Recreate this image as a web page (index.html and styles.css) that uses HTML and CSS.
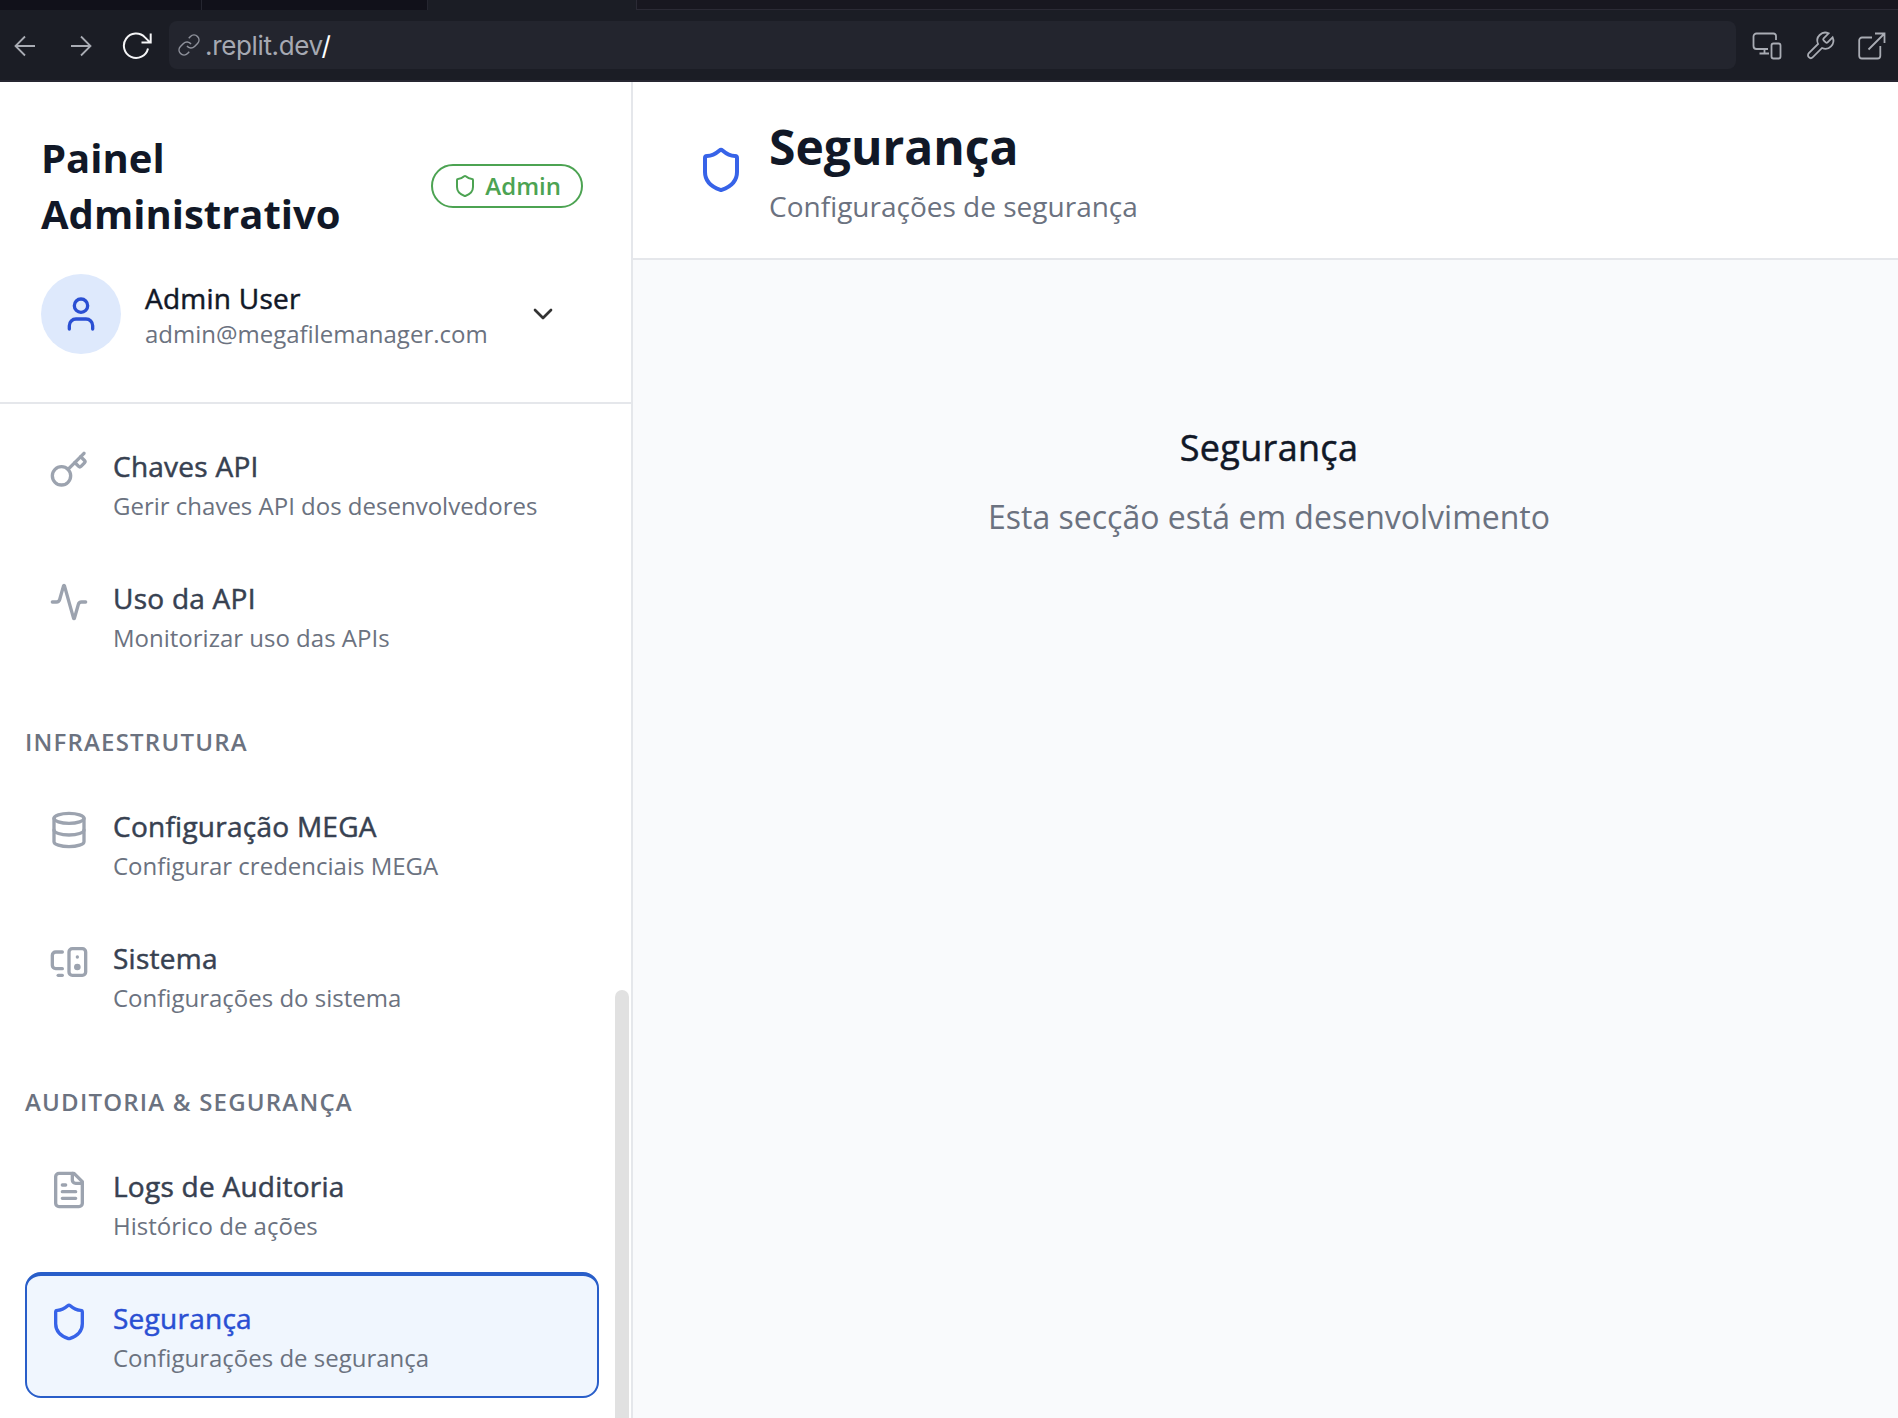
FILE: index.html
```html
<!DOCTYPE html>
<html lang="pt">
<head>
<meta charset="utf-8">
<title>Painel Administrativo</title>
<link rel="stylesheet" href="styles.css">
</head>
<body>
<div class="tabs"><span class="tab tab-first"></span><span class="tab tab-second"></span><span class="tab tab-active"></span><span class="tab tab-rest"></span></div>
<div class="toolbar">
  <div class="nav-buttons">
    <svg class="tool" width="22" height="22" viewBox="0 0 22 22"><path d="M21 11H1.5M11 1.5 1.5 11 11 20.5"/></svg>
    <svg class="tool" width="22" height="22" viewBox="0 0 22 22"><path d="M1 11h19.5M11 1.5l9.5 9.5-9.500 9.500"/></svg>
    <svg class="tool reload" width="30" height="30" viewBox="0 0 30 30"><path d="M26 17.500A12.200 12.200 0 1 1 23 6.400l5 5M28.700 2.500v9H19.500"/></svg>
  </div>
  <div class="address">
    <svg class="link" width="24" height="24" viewBox="0 0 24 24"><path d="M10 13a5 5 0 0 0 7.540.540l3-3a5 5 0 0 0-7.070-7.070l-1.720 1.710M14 11a5 5 0 0 0-7.540-.540l-3 3a5 5 0 0 0 7.070 7.070l1.710-1.710"/></svg>
    <span class="url">.replit.dev<b>/</b></span>
  </div>
  <div class="tools">
    <svg class="tool" width="30" height="28" viewBox="0 0 30 28"><path d="M24 8V4a2.500 2.500 0 0 0-2.500-2.500h-17A3 3 0 0 0 1.500 4.500v9.500a3 3 0 0 0 3 3H16M12.500 17v4.500M7.500 21.500H17"/><rect x="19.500" y="11.500" width="9" height="15" rx="2"/></svg>
    <svg class="tool wrench" width="32" height="32" viewBox="0 0 24 24"><path d="M14.700 6.300a1 1 0 0 0 0 1.400l1.600 1.600a1 1 0 0 0 1.400 0l3.770-3.770a6 6 0 0 1-7.940 7.940l-6.910 6.910a2.120 2.120 0 0 1-3-3l6.910-6.910a6 6 0 0 1 7.940-7.940l-3.760 3.760z"/></svg>
    <svg class="tool" width="28" height="28" viewBox="0 0 28 28"><path d="M14 5.500H4A2.800 2.800 0 0 0 1.200 8.300v15.400a2.800 2.800 0 0 0 2.800 2.800h15.500a2.800 2.800 0 0 0 2.800-2.800V14M17 1.500h9.500V11M26.500 1.500 10.500 17.500"/></svg>
  </div>
</div>
<div class="app">
  <aside class="sidebar">
    <header class="side-head">
      <div class="brand">
        <h2>Painel Administrativo</h2>
        <span class="badge"><svg class="icon i24" viewBox="0 0 24 24"><use href="#shield"/></svg><span class="badge-text">Admin</span></span>
      </div>
      <div class="user">
        <span class="avatar"><svg class="icon i40" viewBox="0 0 24 24"><path d="M19 21v-2a4 4 0 0 0-4-4H9a4 4 0 0 0-4 4v2"/><circle cx="12" cy="7" r="4"/></svg></span>
        <div class="who"><p class="name medium">Admin User</p><p class="mail">admin@megafilemanager.com</p></div>
        <svg class="icon i32 chevron" viewBox="0 0 24 24"><path d="m6 9 6 6 6-6"/></svg>
      </div>
    </header>
    <nav class="menu">
      <div class="group">
        <a class="item"><svg class="icon i40" viewBox="0 0 24 24"><path d="m15.500 7.500 2.300 2.300a1 1 0 0 0 1.400 0l2.100-2.100a1 1 0 0 0 0-1.400L19 4"/><path d="m21 2-9.600 9.600"/><circle cx="7.500" cy="15.500" r="5.500"/></svg><span class="label"><b class="medium">Chaves API</b><small>Gerir chaves API dos desenvolvedores</small></span></a>
        <a class="item"><svg class="icon i40" viewBox="0 0 24 24"><path d="M22 12h-2.480a2 2 0 0 0-1.930 1.460l-2.350 8.360a.25.25 0 0 1-.480 0L9.240 2.180a.25.25 0 0 0-.480 0l-2.350 8.360A2 2 0 0 1 4.490 12H2"/></svg><span class="label"><b class="medium">Uso da API</b><small>Monitorizar uso das APIs</small></span></a>
      </div>
      <h3>Infraestrutura</h3>
      <div class="group">
        <a class="item"><svg class="icon i40" viewBox="0 0 24 24"><ellipse cx="12" cy="5" rx="9" ry="3"/><path d="M3 5v14a9 3 0 0 0 18 0V5"/><path d="M3 12a9 3 0 0 0 18 0"/></svg><span class="label"><b class="medium">Configuração MEGA</b><small>Configurar credenciais MEGA</small></span></a>
        <a class="item"><svg class="icon i40" viewBox="0 0 24 24"><path d="M5.500 20H8"/><path d="M17 9h.010"/><rect width="10" height="16" x="12" y="4" rx="2"/><path d="M8 6H4a2 2 0 0 0-2 2v6a2 2 0 0 0 2 2h4"/><circle cx="17" cy="15" r="1"/></svg><span class="label"><b class="medium">Sistema</b><small>Configurações do sistema</small></span></a>
      </div>
      <h3>Auditoria &amp; Segurança</h3>
      <div class="group">
        <a class="item"><svg class="icon i40" viewBox="0 0 24 24"><path d="M15 2H6a2 2 0 0 0-2 2v16a2 2 0 0 0 2 2h12a2 2 0 0 0 2-2V7Z"/><path d="M14 2v4a2 2 0 0 0 2 2h4M10 9H8M16 13H8M16 17H8"/></svg><span class="label"><b class="medium">Logs de Auditoria</b><small>Histórico de ações</small></span></a>
        <a class="item active"><svg class="icon i40" viewBox="0 0 24 24"><use href="#shield"/></svg><span class="label"><b class="medium">Segurança</b><small>Configurações de segurança</small></span></a>
      </div>
      <span class="scroll-thumb"></span>
    </nav>
  </aside>
  <main class="main">
    <header class="page-head">
      <svg class="icon i48" viewBox="0 0 24 24"><path id="shield" d="M20 13c0 5-3.500 7.500-7.660 8.950a1 1 0 0 1-.670-.010C7.500 20.500 4 18 4 13V6a1 1 0 0 1 1-1c2 0 4.500-1.200 6.240-2.720a1.170 1.170 0 0 1 1.520 0C14.510 3.810 17 5 19 5a1 1 0 0 1 1 1z"/></svg>
      <div><h1>Segurança</h1><p>Configurações de segurança</p></div>
    </header>
    <section class="empty"><h3 class="medium">Segurança</h3><p>Esta secção está em desenvolvimento</p></section>
  </main>
</div>
</body>
</html>
```

FILE: styles.css
```css
* { box-sizing: border-box; margin: 0; padding: 0; }
body {
  height: 1418px;
  overflow: hidden;
  display: flex;
  flex-direction: column;
  background: #fff;
  font-family: "Open Sans", "Noto Sans", sans-serif;
}
svg { display: block; flex: none; fill: none; }

/* medium weight, between the regular and semibold faces */
.medium { font-weight: 400; letter-spacing: 0.009em; -webkit-text-stroke: 0.5px currentColor; }

/* browser chrome */
.tabs { display: flex; flex: none; height: 10px; background: #1b1d25; }
.tab { height: 10px; background: #11111a; }
.tab-first { width: 202px; border-right: 1px solid #252630; }
.tab-second { width: 226px; border-right: 1px solid #252630; }
.tab-active { width: 208px; background: #1b1d25; }
.tab-rest { flex: 1; background: #181720; border-left: 1px solid #2b2a35; border-bottom: 1px solid #2b2a35; }
.toolbar {
  display: flex;
  flex: none;
  align-items: center;
  height: 72px;
  padding-right: 12px;
  background: #1b1d25;
  border-bottom: 2px solid #262631;
}
.nav-buttons { display: flex; align-items: center; width: 169px; padding: 1px 0 0 14px; gap: 34px; }
.tool { stroke: #a9acb4; stroke-width: 1.8; }
.reload { stroke: #f5f5f7; stroke-width: 2; margin-left: -4px; }
.address {
  display: flex;
  flex: 1;
  align-items: center;
  gap: 4px;
  height: 48px;
  padding-left: 8px;
  background: #23252e;
  border-radius: 8px;
}
.link { stroke: #8f929c; stroke-width: 1.5; }
.url { padding-top: 2px; color: #a6a9b2; font: 26px/48px Inter, sans-serif; letter-spacing: -0.35px; }
.url b { color: #fff; font-weight: 400; }
.tools { display: flex; align-items: center; width: 150px; padding: 1px 0 0 16px; gap: 22px; }
.wrench { stroke-width: 1.35; }

.app { display: flex; flex: 1; min-height: 0; }
.icon { stroke: currentColor; stroke-width: 2; stroke-linecap: round; stroke-linejoin: round; }
.i24 { width: 24px; height: 24px; }
.i32 { width: 32px; height: 32px; }
.i40 { width: 40px; height: 40px; }
.i48 { width: 48px; height: 48px; }

/* sidebar */
.sidebar { display: flex; flex: none; flex-direction: column; width: 633px; border-right: 2px solid #e5e7eb; }
.side-head { padding: 48px 48px 48px 41px; border-bottom: 2px solid #e5e7eb; }
.brand { display: flex; align-items: center; justify-content: space-between; margin-bottom: 32px; }
.brand h2 { width: 320px; color: #111827; font-size: 40px; font-weight: 700; line-height: 56px; }
.badge {
  display: flex;
  align-items: center;
  gap: 8px;
  height: 44px;
  padding: 0 20px;
  color: #4ca352;
  border: 2px solid #4ca352;
  border-radius: 22px;
  font-size: 24px;
  font-weight: 600;
}
.badge-text { padding-bottom: 2px; }
.user { display: flex; align-items: center; padding-right: 24px; }
.avatar { display: grid; place-items: center; width: 80px; height: 80px; color: #2a4fd3; background: #dee9fc; border-radius: 50%; }
.who { flex: 1; margin-left: 24px; }
.name { color: #111827; font-size: 28px; line-height: 40px; }
.mail { color: #6b7280; font-size: 24px; line-height: 32px; }
.chevron { color: #333; }

.menu { position: relative; flex: 1; padding: 18px 32px 0 25px; overflow: hidden; }
.group { display: flex; flex-direction: column; gap: 8px; }
.menu h3 {
  margin: 48px 0 24px;
  color: #6b7280;
  font-size: 24px;
  font-weight: 600;
  line-height: 32px;
  letter-spacing: 1.2px;
  text-transform: uppercase;
}
.item { display: flex; gap: 24px; height: 124px; padding: 24px; color: #9ca3af; border-radius: 16px; }
.item .icon { margin-top: 4px; }
.label { display: flex; flex-direction: column; gap: 4px; }
.label b { color: #374151; font-size: 28px; line-height: 40px; }
.label small { color: #6b7280; font-size: 24px; line-height: 32px; }
.active {
  height: 126px;
  margin-top: -2px;
  padding: 22px;
  color: #3763e8;
  background: #f0f6fe;
  border: 2px solid #295ec9;
  border-top-width: 4px;
}
.label b.medium { font-weight: 400; }
.active .label b { color: #2a4fd3; }
.scroll-thumb { position: absolute; top: 586px; right: 2px; bottom: -20px; width: 14px; background: #e1e1e1; border-radius: 7px; }

/* content */
.main { flex: 1; background: #f9fafc; }
.page-head { display: flex; align-items: center; gap: 24px; height: 178px; padding: 0 64px; color: #3763e8; background: #fff; border-bottom: 2px solid #e5e7eb; }
.page-head h1 { padding-top: 1px; color: #111827; font-size: 48px; font-weight: 700; line-height: 64px; }
.page-head p { margin-top: 7px; color: #6b7280; font-size: 28px; line-height: 40px; }
.empty { padding: 160px 0 0 7px; text-align: center; }
.empty h3 { color: #111827; font-size: 36px; line-height: 56px; }
.empty p { margin-top: 17px; color: #6b7280; font-size: 32px; line-height: 48px; }
```
